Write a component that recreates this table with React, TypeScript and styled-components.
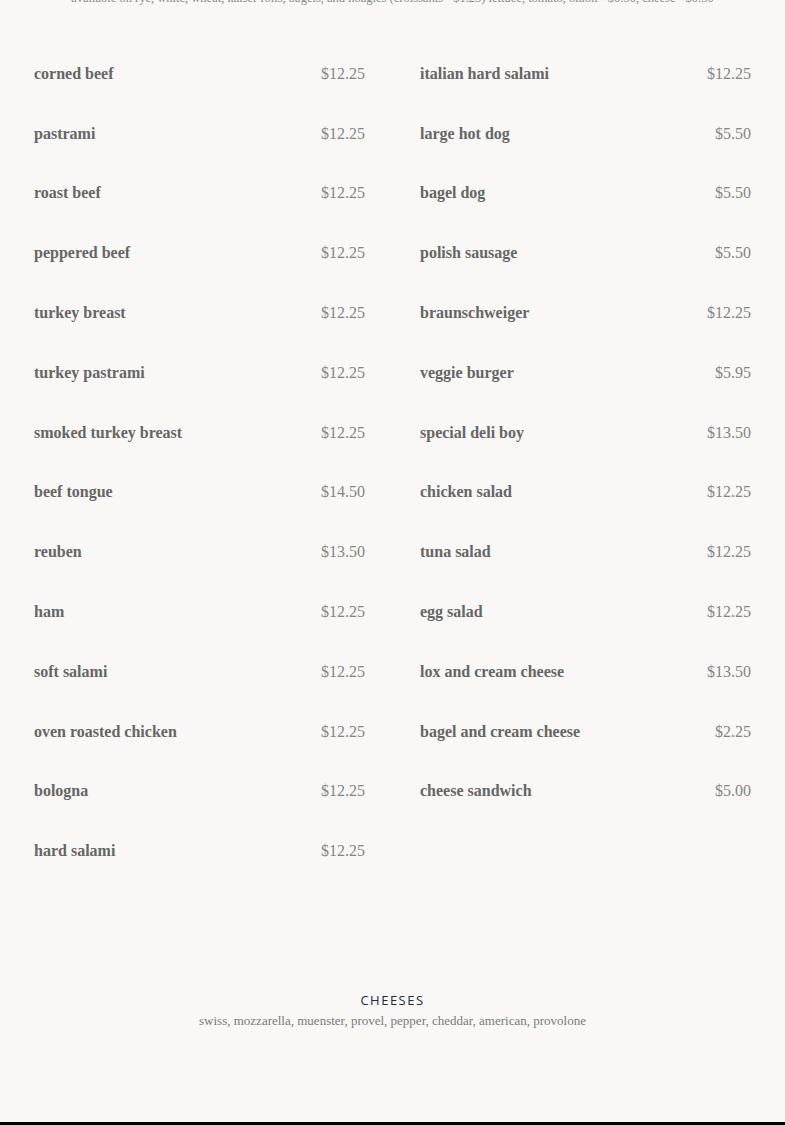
import React, { FC } from 'react'
import styled, { createGlobalStyle } from 'styled-components'

const leftItems = [
  ['corned beef', '$12.25'],
  ['pastrami', '$12.25'],
  ['roast beef', '$12.25'],
  ['peppered beef', '$12.25'],
  ['turkey breast', '$12.25'],
  ['turkey pastrami', '$12.25'],
  ['smoked turkey breast', '$12.25'],
  ['beef tongue', '$14.50'],
  ['reuben', '$13.50'],
  ['ham', '$12.25'],
  ['soft salami', '$12.25'],
  ['oven roasted chicken', '$12.25'],
  ['bologna', '$12.25'],
  ['hard salami', '$12.25'],
]

const rightItems = [
  ['italian hard salami', '$12.25'],
  ['large hot dog', '$5.50'],
  ['bagel dog', '$5.50'],
  ['polish sausage', '$5.50'],
  ['braunschweiger', '$12.25'],
  ['veggie burger', '$5.95'],
  ['special deli boy', '$13.50'],
  ['chicken salad', '$12.25'],
  ['tuna salad', '$12.25'],
  ['egg salad', '$12.25'],
  ['lox and cream cheese', '$13.50'],
  ['bagel and cream cheese', '$2.25'],
  ['cheese sandwich', '$5.00'],
]

const App: FC = () => {
  return (
    <>
      <GlobalStyle />
      <Page>
        <Intro>
          available on rye, white, wheat, kaiser rolls, bagels, and hoagies
          (croissants +$1.25) lettuce, tomato, onion +$0.50, cheese +$0.50
        </Intro>
        <Columns>
          {[leftItems, rightItems].map((list, i) => (
            <Column key={i}>
              {list.map(([name, price]) => (
                <Row key={name}>
                  <Name>{name}</Name>
                  <Price>{price}</Price>
                </Row>
              ))}
            </Column>
          ))}
        </Columns>
        <Section>
          <SectionTitle>CHEESES</SectionTitle>
          <SectionText>
            swiss, mozzarella, muenster, provel, pepper, cheddar, american,
            provolone
          </SectionText>
        </Section>
      </Page>
      <Footer />
    </>
  )
}

export default App

const GlobalStyle = createGlobalStyle`
  html, body {
    margin: 0;
    padding: 0;
    background: #f9f8f6;
  }
  body {
    font-family: "Liberation Serif", "DejaVu Serif", serif;
    overflow: hidden;
  }
`

const Page = styled.main`
  background: #f9f8f6;
  padding: 0 34px;
  margin-top: -10px;
`

const Intro = styled.p`
  margin: 0;
  text-align: center;
  font-size: 12.5px;
  line-height: 16px;
  color: #8a8a8a;
  white-space: nowrap;
`

const Columns = styled.div`
  display: grid;
  grid-template-columns: 331px 331px;
  column-gap: 55px;
  margin-top: 38px;
`

const Column = styled.div`
  display: flex;
  flex-direction: column;
`

const Row = styled.div`
  height: 59.8px;
  display: flex;
  align-items: center;
  justify-content: space-between;
`

const Name = styled.span`
  font-size: 16px;
  font-weight: 700;
  color: #666;
`

const Price = styled.span`
  font-size: 16px;
  color: #858585;
`

const Section = styled.section`
  text-align: center;
  padding: 110px 0 93px;
`

const SectionTitle = styled.h3`
  margin: 0;
  font-family: "Open Sans", "Liberation Sans", sans-serif;
  font-weight: 400;
  font-size: 13px;
  letter-spacing: 1.5px;
  line-height: 18px;
  color: #1d2a3b;
`

const SectionText = styled.p`
  margin: 3px 0 0;
  font-size: 13px;
  line-height: 17px;
  color: #7a7a7a;
`

const Footer = styled.footer`
  height: 40px;
  background: #000;
`
